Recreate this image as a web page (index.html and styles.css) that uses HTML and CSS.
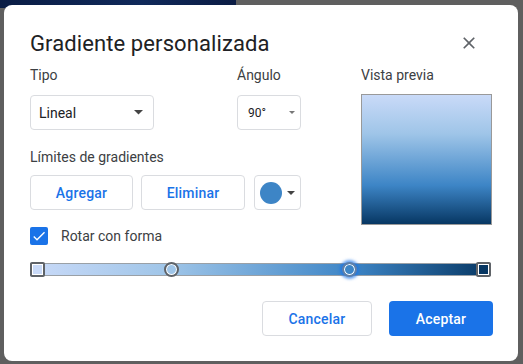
FILE: index.html
```html
<!DOCTYPE html>
<html>
<head>
    <title>Gradiente personalizada</title>
    <link rel="stylesheet" href="styles.css">
</head>
<body>
    <div class="stage">
        <div class="dialog">
            <div class="dialog-header">
                <h1>Gradiente personalizada</h1>
                <button class="close-btn" aria-label="Cerrar">
                    <svg viewBox="0 0 24 24" width="20" height="20"><path d="M19 6.41L17.59 5 12 10.59 6.41 5 5 6.41 10.59 12 5 17.59 6.41 19 12 13.41 17.59 19 19 17.59 13.41 12z" fill="#5f6368"/></svg>
                </button>
            </div>

            <div class="body">
                <div class="controls">
                    <div class="row">
                        <div class="field field-type">
                            <div class="label">Tipo</div>
                            <div class="select">
                                <span>Lineal</span>
                                <svg viewBox="0 0 10 5" width="9" height="4.5"><path d="M0 0l5 5 5-5z" fill="#444"/></svg>
                            </div>
                        </div>
                        <div class="field">
                            <div class="label">Ángulo</div>
                            <div class="select select-small">
                                <span>90°</span>
                                <svg viewBox="0 0 10 5" width="6" height="3"><path d="M0 0l5 5 5-5z" fill="#777"/></svg>
                            </div>
                        </div>
                    </div>

                    <div class="label label-limits">Límites de gradientes</div>
                    <div class="stop-buttons">
                        <button class="btn btn-outline btn-add">Agregar</button>
                        <button class="btn btn-outline btn-remove">Eliminar</button>
                        <button class="btn btn-outline btn-color">
                            <span class="swatch"></span>
                            <svg viewBox="0 0 10 5" width="8" height="4"><path d="M0 0l5 5 5-5z" fill="#444"/></svg>
                        </button>
                    </div>

                    <label class="check-row">
                        <span class="checkbox">
                            <svg viewBox="0 0 24 24" width="16" height="16"><path d="M9 16.2L4.8 12l-1.4 1.4L9 19 21 7l-1.4-1.4L9 16.2z" fill="#fff"/></svg>
                        </span>
                        Rotar con forma
                    </label>
                </div>

                <div class="preview-col">
                    <div class="label">Vista previa</div>
                    <div class="preview"></div>
                </div>
            </div>

            <div class="slider">
                <div class="track"></div>
                <span class="handle square" style="left: calc((100% - 15px) * 0); background: #c9daf8;"></span>
                <span class="handle" style="left: calc((100% - 15px) * 0.3); background: #9fc5e8;"></span>
                <span class="handle selected" style="left: calc((100% - 15px) * 0.7); background: #3d85c6;"></span>
                <span class="handle square" style="left: calc((100% - 15px) * 1); background: #073763;"></span>
            </div>

            <div class="footer">
                <button class="btn btn-outline btn-cancel">Cancelar</button>
                <button class="btn btn-primary">Aceptar</button>
            </div>
        </div>
    </div>
</body>
</html>
```

FILE: styles.css
```css
body {
    margin: 0;
    font-family: Roboto, Arial, sans-serif;
    background-color: #5f5f5f;
}
.stage {
    height: 364px;
    overflow: hidden;
    padding: 5px 5px 0 4px;
    box-sizing: border-box;
    background: linear-gradient(90deg, #0a1d45, #10295a 60%, #0b1c44) 0 0 / 236px 8px no-repeat, #5f5f5f;
}
.dialog {
    width: 514px;
    height: 356px;
    box-sizing: border-box;
    background-color: white;
    border-radius: 8px;
    padding: 24px 25px 0 26px;
}
.dialog-header {
    display: flex;
    justify-content: space-between;
    align-items: center;
    height: 28px;
}
h1 {
    margin: 0;
    font-size: 22px;
    font-weight: 400;
    color: #202124;
    letter-spacing: 0.1px;
}
.close-btn {
    border: none;
    background: none;
    padding: 0;
    width: 20px;
    height: 20px;
    margin-right: 14px;
    cursor: pointer;
}
.close-btn svg {
    display: block;
}
.body {
    display: flex;
}
.controls {
    width: 331px;
}
.row {
    display: flex;
}
.field-type {
    width: 207px;
}
.label {
    margin-top: 8px;
    font-size: 14px;
    line-height: 20px;
    color: #3c4043;
}
.select {
    margin-top: 10px;
    box-sizing: border-box;
    width: 124px;
    height: 35px;
    border: 1px solid #dadce0;
    border-radius: 4px;
    display: flex;
    align-items: center;
    justify-content: space-between;
    padding: 0 10px 0 8px;
    font-size: 14px;
    color: #202124;
}
.select-small {
    width: 64px;
    font-size: 12px;
    padding: 0 5px 0 10px;
}
.label-limits {
    margin-top: 17px;
}
.stop-buttons {
    display: flex;
    gap: 8px;
    margin-top: 8px;
}
.btn {
    box-sizing: border-box;
    height: 35px;
    border-radius: 4px;
    font-family: Roboto, Arial, sans-serif;
    font-size: 14px;
    font-weight: 500;
    letter-spacing: 0.2px;
    cursor: pointer;
}
.btn-outline {
    background-color: white;
    border: 1px solid #dadce0;
    color: #1a73e8;
}
.btn-add {
    width: 103px;
}
.btn-remove {
    width: 104px;
}
.btn-color {
    width: 47px;
    margin-left: 1px;
    display: flex;
    align-items: center;
    padding: 0 0 0 5px;
    gap: 5px;
}
.swatch {
    width: 22px;
    height: 22px;
    border-radius: 50%;
    background-color: #3d85c6;
}
.check-row {
    display: flex;
    align-items: center;
    gap: 13px;
    margin-top: 17px;
    font-size: 14px;
    color: #3c4043;
    height: 18px;
}
.checkbox {
    width: 18px;
    height: 18px;
    border-radius: 2px;
    background-color: #1a73e8;
    display: flex;
    align-items: center;
    justify-content: center;
}
.preview {
    margin-top: 9px;
    width: 131px;
    height: 131px;
    box-sizing: border-box;
    border: 1px solid #999;
    background: linear-gradient(180deg, #c9daf8 0%, #9fc5e8 30%, #3d85c6 70%, #073763 100%);
}
.slider {
    position: relative;
    margin: 17px 2px 0 0;
    height: 15px;
}
.track {
    position: absolute;
    left: 0;
    right: 0;
    top: 1px;
    height: 13px;
    box-sizing: border-box;
    border: 1px solid #9aa0a6;
    background: linear-gradient(90deg, #c9daf8 0%, #9fc5e8 30%, #3d85c6 70%, #073763 100%);
}
.handle {
    position: absolute;
    top: 0;
    width: 15px;
    height: 15px;
    box-sizing: border-box;
    border-radius: 50%;
    border: 2px solid #5f6368;
    box-shadow: inset 0 0 0 1px white;
}
.handle.square {
    border-radius: 2px;
}
.handle.selected {
    border-color: #5f7fa8;
    box-shadow: inset 0 0 0 1px white, 0 0 3px 2px rgba(26, 115, 232, 0.7);
}
.footer {
    display: flex;
    justify-content: flex-end;
    gap: 17px;
    margin-top: 24px;
}
.btn-cancel {
    width: 110px;
}
.btn-primary {
    width: 104px;
    background-color: #1a73e8;
    border: none;
    color: white;
}
```
